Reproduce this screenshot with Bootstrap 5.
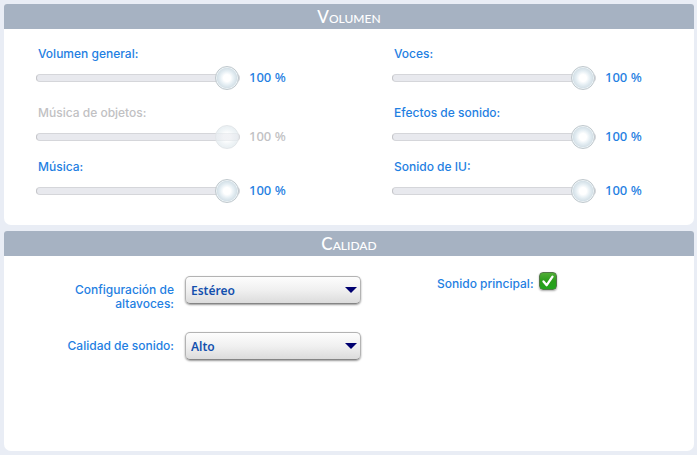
<!DOCTYPE html>
<html lang="es">
<head>
<meta charset="utf-8">
<meta name="viewport" content="width=device-width, initial-scale=1">
<title>Opciones de sonido</title>
<link href="https://cdn.jsdelivr.net/npm/bootstrap@5.3.0/dist/css/bootstrap.min.css" rel="stylesheet">
<style>
body { background: #e9edf5; font: 500 12px/20px Inter, sans-serif; color: #1f80e2; padding: 4px 3px 4px 4px; gap: 6px; }
.panel { background: #fff; border-radius: 3px 3px 7px 7px; }
.panel-title { background: #a6b2c2; color: #fff; font: 500 17px/25px Lato, sans-serif; font-variant: small-caps; border-radius: 3px 3px 0 0; }
.volume-grid { display: grid; grid-template-columns: 356fr 302fr; grid-template-rows: 59px 54px auto; padding: 15px 0 21px 32px; }
.volume-item label { padding-left: 2px; }
.volume-line { gap: 9px; height: 27px; }
.volume-line output { font: 500 13px/18px "Noto Sans", sans-serif; padding-bottom: 2px; }
.slider { -webkit-appearance: none; appearance: none; width: 204px; height: 26px; margin: 0; background: transparent; }
.slider::-webkit-slider-runnable-track { height: 8px; border: 1px solid #d5d6da; border-left-color: #c2c3c7; border-radius: 4px; background: #e8e9ee; }
.slider::-webkit-slider-thumb { -webkit-appearance: none; width: 24px; height: 24px; margin-top: -9px; border: 1px solid #bfc8cd; border-radius: 50%; background: radial-gradient(circle closest-side, #fff 0 32%, #e6eff4 62%, #d5e1e8 88%, #edf3f6 96%); }
.slider:disabled::-webkit-slider-thumb { border-color: #e2e6e9; background: linear-gradient(transparent 7px, #dfe3e799 7px 8px, #e8eaef99 8px 14px, #dfe3e799 14px 15px, transparent 15px), radial-gradient(circle closest-side, #fff 0 32%, #f2f6f8 65%, #ebf1f4 90%); }
.volume-off { color: #c1c1c3; }
.quality { padding-top: 16px; column-gap: 76px; }
.quality-form { display: grid; grid-template-columns: 170px 176px; column-gap: 11px; grid-template-rows: 56px 56px; }
.quality-form label { line-height: 14px; text-align: right; margin-top: 11px; }
.quality-form .two-line { padding-left: 48px; }
.combo { -webkit-appearance: none; appearance: none; height: 28px; margin-top: 4px; padding: 2px 24px 0 5px; border: 1px solid #b3b3b3; border-bottom-color: #858585; border-radius: 5px; box-shadow: 0 1px 2px #0006; color: #1450ae; font: 600 12px/20px "Noto Sans", sans-serif; background: url("data:image/svg+xml,%3Csvg xmlns='http://www.w3.org/2000/svg' width='12' height='6'%3E%3Cpath d='M0 0h12L6 6z' fill='%23000070'/%3E%3C/svg%3E") right 3px top 10px no-repeat, linear-gradient(#fdfdfd, #f0f0f0 50%, #dcdcdc); }
.main-sound { gap: 5px; height: 20px; }
.main-sound label { padding-top: 2px; }
.green-check { -webkit-appearance: none; appearance: none; width: 18px; height: 18px; margin: 0; border: 1px solid #53784a; border-radius: 4px; box-shadow: 0 1px 2px #0005; background: #32a321; }
.green-check:checked { background: url("data:image/svg+xml,%3Csvg xmlns='http://www.w3.org/2000/svg' viewBox='0 0 16 16'%3E%3Cpath d='M3.5 8.4l3.2 3.8L12.5 3.6' fill='none' stroke='%23fff' stroke-width='2.3' stroke-linecap='round' stroke-linejoin='round'/%3E%3C/svg%3E") center / 16px no-repeat, linear-gradient(#50ae36, #2b9c1b 50%, #20a51b); }
</style>
</head>
<body class="d-flex flex-column min-vh-100">
<section class="panel">
  <h2 class="panel-title text-center m-0">Volumen</h2>
  <div class="volume-grid">
    <div class="volume-item">
      <label class="d-block" for="general">Volumen general:</label>
      <div class="volume-line d-flex align-items-center"><input class="slider" type="range" id="general" value="100"><output for="general">100 %</output></div>
    </div>
    <div class="volume-item">
      <label class="d-block" for="voces">Voces:</label>
      <div class="volume-line d-flex align-items-center"><input class="slider" type="range" id="voces" value="100"><output for="voces">100 %</output></div>
    </div>
    <div class="volume-item volume-off">
      <label class="d-block" for="objetos">Música de objetos:</label>
      <div class="volume-line d-flex align-items-center"><input class="slider" type="range" id="objetos" value="100" disabled><output for="objetos">100 %</output></div>
    </div>
    <div class="volume-item">
      <label class="d-block" for="efectos">Efectos de sonido:</label>
      <div class="volume-line d-flex align-items-center"><input class="slider" type="range" id="efectos" value="100"><output for="efectos">100 %</output></div>
    </div>
    <div class="volume-item">
      <label class="d-block" for="musica">Música:</label>
      <div class="volume-line d-flex align-items-center"><input class="slider" type="range" id="musica" value="100"><output for="musica">100 %</output></div>
    </div>
    <div class="volume-item">
      <label class="d-block" for="interfaz">Sonido de IU:</label>
      <div class="volume-line d-flex align-items-center"><input class="slider" type="range" id="interfaz" value="100"><output for="interfaz">100 %</output></div>
    </div>
  </div>
</section>
<section class="panel flex-fill">
  <h2 class="panel-title text-center m-0">Calidad</h2>
  <div class="quality d-flex flex-wrap">
    <div class="quality-form">
      <label class="two-line" for="altavoces">Configuración de altavoces:</label>
      <select class="combo" id="altavoces"><option>Estéreo</option></select>
      <label for="calidad">Calidad de sonido:</label>
      <select class="combo" id="calidad"><option>Alto</option></select>
    </div>
    <div class="main-sound d-flex align-items-start">
      <label for="principal">Sonido principal:</label>
      <input class="green-check" type="checkbox" id="principal" checked>
    </div>
  </div>
</section>
<script src="https://cdn.jsdelivr.net/npm/bootstrap@5.3.0/dist/js/bootstrap.bundle.min.js"></script>
</body>
</html>
